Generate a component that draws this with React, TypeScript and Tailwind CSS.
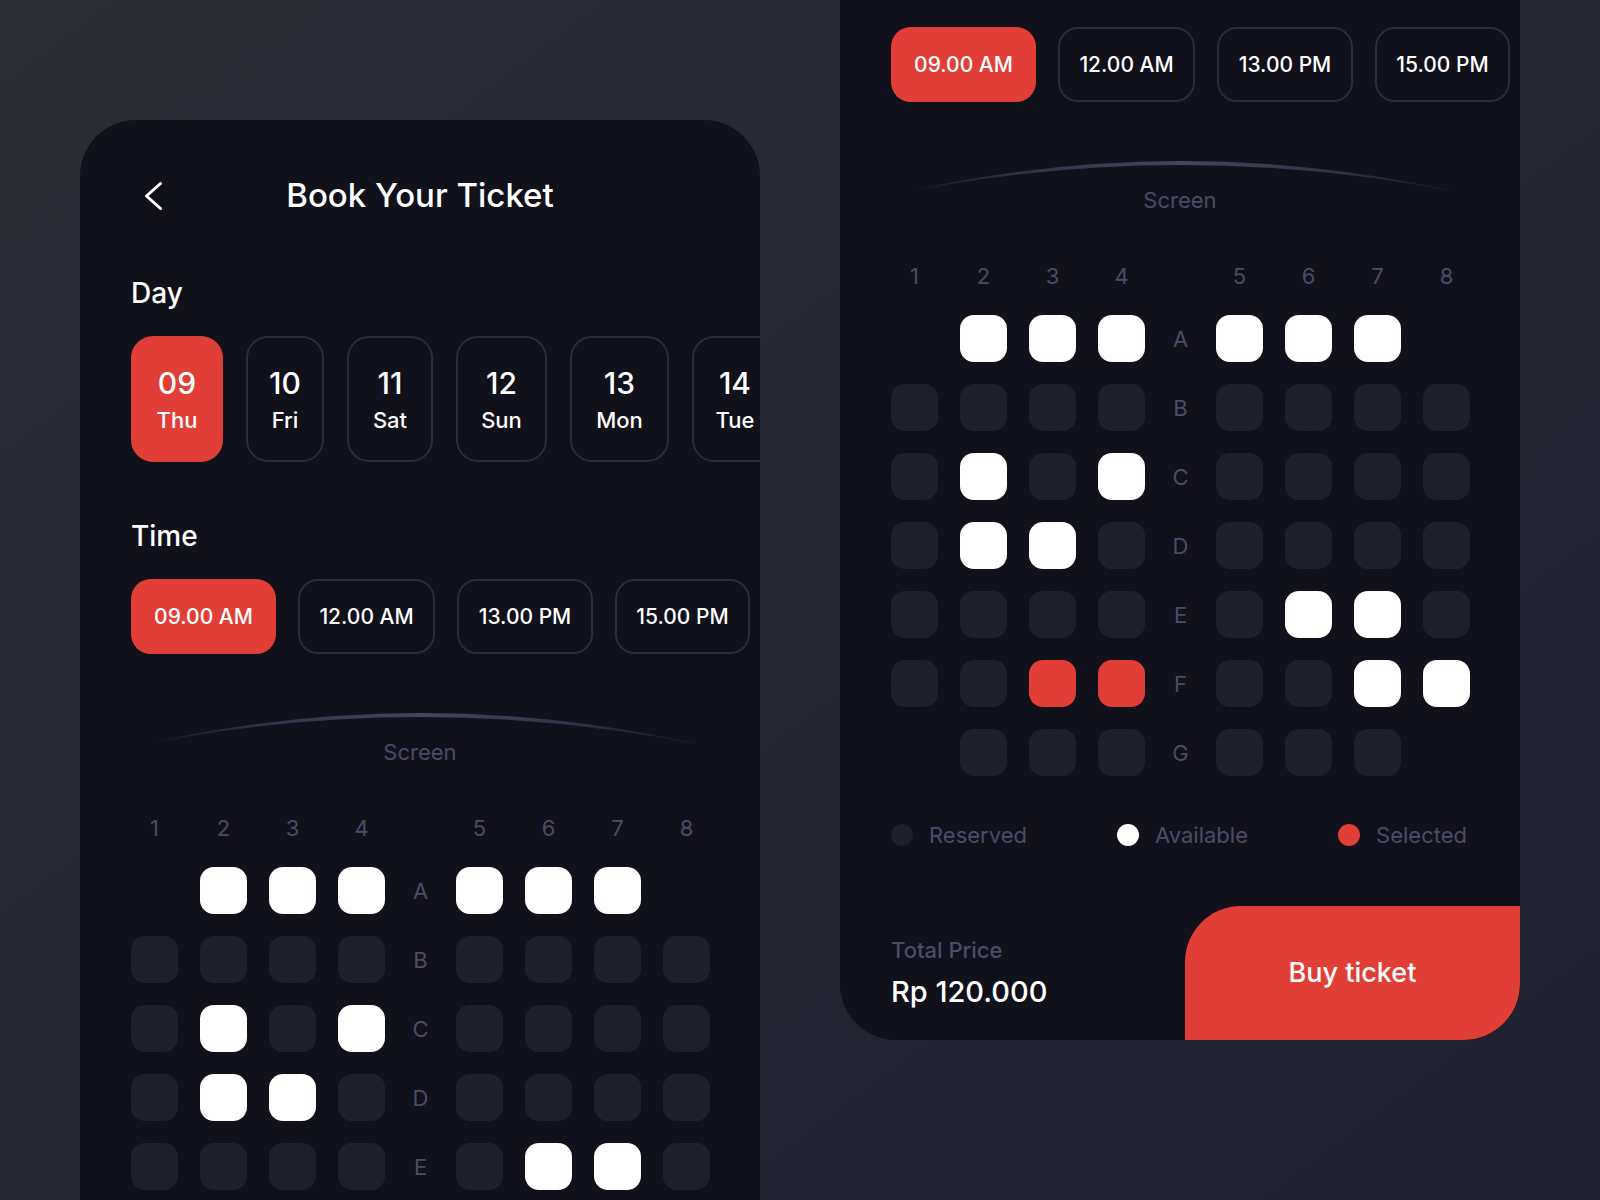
import React from 'react'

const font = { fontFamily: 'Inter, "Open Sans", sans-serif' }

const days = [
  { num: '09', name: 'Thu', w: 'w-[92px]', active: true },
  { num: '10', name: 'Fri', w: 'w-[78px]', active: false },
  { num: '11', name: 'Sat', w: 'w-[86px]', active: false },
  { num: '12', name: 'Sun', w: 'w-[91px]', active: false },
  { num: '13', name: 'Mon', w: 'w-[99px]', active: false },
  { num: '14', name: 'Tue', w: 'w-[86px]', active: false },
]

const times = [
  { label: '09.00 AM', w: 'w-[145px]', active: true },
  { label: '12.00 AM', w: 'w-[137px]', active: false },
  { label: '13.00 PM', w: 'w-[136px]', active: false },
  { label: '15.00 PM', w: 'w-[135px]', active: false },
]

// e = empty, r = reserved, a = available, s = selected
const rows: { id: string; seats: string }[] = [
  { id: 'A', seats: 'eaaaaaae' },
  { id: 'B', seats: 'rrrrrrrr' },
  { id: 'C', seats: 'rararrrr' },
  { id: 'D', seats: 'raarrrrr' },
  { id: 'E', seats: 'rrrrraar' },
  { id: 'F', seats: 'rrssrraa' },
  { id: 'G', seats: 'errrrrre' },
]

const gridCols = 'grid grid-cols-[47px_47px_47px_47px_27px_47px_47px_47px_47px] gap-x-[22px]'

function Seat({ kind }: { kind: string }) {
  if (kind === 'e') return <div className="w-[47px] h-[47px]" />
  const color =
    kind === 'a' ? 'bg-white' : kind === 's' ? 'bg-[#e13e37]' : 'bg-[#1f202b]'
  return <div className={`w-[47px] h-[47px] rounded-[14px] ${color}`} />
}

function SeatRow({ id, seats }: { id: string; seats: string }) {
  const cells = seats.split('')
  return (
    <div className={`${gridCols} items-center`}>
      {cells.slice(0, 4).map((k, i) => (
        <Seat key={i} kind={k} />
      ))}
      <div className="text-center text-[22px] leading-[28px] text-[#4b4c66]">{id}</div>
      {cells.slice(4).map((k, i) => (
        <Seat key={i + 4} kind={k} />
      ))}
    </div>
  )
}

function Panel({ className }: { className: string }) {
  return (
    <div
      className={`w-[680px] h-[1472px] shrink-0 rounded-[56px] bg-[#11111b] overflow-hidden flex flex-col ${className}`}
    >
      <div className="px-[51px] flex flex-col">
        {/* Header */}
        <div className="mt-[47px] h-[56px] grid grid-cols-[1fr_auto_1fr] items-center">
          <svg className="ml-[13px]" width="20" height="32" viewBox="0 0 20 32" fill="none">
            <path d="M16.5 4.5L2.5 17L16.5 29.5" stroke="white" strokeWidth="3" strokeLinecap="round" strokeLinejoin="round" />
          </svg>
          <h1 className="text-[33px] leading-[40px] font-medium text-white">Book Your Ticket</h1>
          <div />
        </div>

        {/* Day */}
        <p className="mt-[52px] text-[28px] leading-[36px] font-medium text-white">Day</p>
        <div className="mt-[25px] flex gap-[23px]">
          {days.map((d) => (
            <div
              key={d.num}
              className={`${d.w} h-[126px] shrink-0 rounded-[22px] flex flex-col items-center justify-center gap-[5px] ${
                d.active ? 'bg-[#e13e37]' : 'border-2 border-[#2c2c3d]'
              }`}
            >
              <span className="text-[30px] leading-[36px] font-medium text-white">{d.num}</span>
              <span className="text-[22px] leading-[28px] font-medium text-white">{d.name}</span>
            </div>
          ))}
        </div>

        {/* Time */}
        <p className="mt-[56px] text-[28px] leading-[36px] font-medium text-white">Time</p>
        <div className="mt-[25px] flex gap-[22px]">
          {times.map((t) => (
            <div
              key={t.label}
              className={`${t.w} h-[75px] shrink-0 rounded-[20px] flex items-center justify-center text-[21px] font-medium text-white ${
                t.active ? 'bg-[#e13e37]' : 'border-2 border-[#2c2c3d]'
              }`}
            >
              {t.label}
            </div>
          ))}
        </div>

        {/* Screen */}
        <svg className="mt-[54px]" width="580" height="40" viewBox="0 0 580 40" fill="none">
          <defs>
            <linearGradient id="scr" x1="0" y1="0" x2="1" y2="0">
              <stop offset="0" stopColor="#3f4058" stopOpacity="0.05" />
              <stop offset="0.25" stopColor="#3f4058" stopOpacity="0.75" />
              <stop offset="0.5" stopColor="#45465e" stopOpacity="1" />
              <stop offset="0.75" stopColor="#3f4058" stopOpacity="0.75" />
              <stop offset="1" stopColor="#3f4058" stopOpacity="0.05" />
            </linearGradient>
          </defs>
          <path d="M0 39 Q 290 -29 580 39 Q 290 -21 0 39 Z" fill="url(#scr)" />
        </svg>
        <p className="-mt-[10px] text-center text-[22px] leading-[28px] text-[#4b4c66]">Screen</p>

        {/* Column numbers */}
        <div className={`${gridCols} mt-[48px]`}>
          {['1', '2', '3', '4', '', '5', '6', '7', '8'].map((n, i) => (
            <div key={i} className="text-center text-[22px] leading-[28px] text-[#4b4c66]">
              {n}
            </div>
          ))}
        </div>

        {/* Seats */}
        <div className="mt-[25px] flex flex-col gap-[22px]">
          {rows.map((r) => (
            <SeatRow key={r.id} id={r.id} seats={r.seats} />
          ))}
        </div>

        {/* Legend */}
        <div className="mt-[45px] flex items-center justify-between w-[576px]">
          <div className="flex items-center gap-[16px]">
            <span className="w-[22px] h-[22px] rounded-full bg-[#1f202b]" />
            <span className="text-[22px] leading-[28px] text-[#4b4c66]">Reserved</span>
          </div>
          <div className="flex items-center gap-[16px]">
            <span className="w-[22px] h-[22px] rounded-full bg-white" />
            <span className="text-[22px] leading-[28px] text-[#4b4c66]">Available</span>
          </div>
          <div className="flex items-center gap-[16px]">
            <span className="w-[22px] h-[22px] rounded-full bg-[#e13e37]" />
            <span className="text-[22px] leading-[28px] text-[#4b4c66]">Selected</span>
          </div>
        </div>
      </div>

      {/* Footer */}
      <div className="mt-auto flex items-center h-[134px] pl-[51px]">
        <div className="flex-1 flex flex-col gap-[9px]">
          <span className="text-[22px] leading-[28px] font-medium text-[#4b4c66]">Total Price</span>
          <span className="text-[29px] leading-[38px] font-medium text-white">Rp 120.000</span>
        </div>
        <button className="w-[335px] h-[134px] bg-[#e13e37] rounded-tl-[56px] rounded-br-[56px] flex items-center justify-center text-[27px] font-medium text-white">
          Buy ticket
        </button>
      </div>
    </div>
  )
}

export default function App() {
  return (
    <div
      style={font}
      className="w-[1600px] h-[1200px] overflow-hidden flex items-start bg-gradient-to-br from-[#2b2c34] to-[#1f2130]"
    >
      <Panel className="ml-[80px] mt-[120px]" />
      <Panel className="ml-[80px] -mt-[432px]" />
    </div>
  )
}
